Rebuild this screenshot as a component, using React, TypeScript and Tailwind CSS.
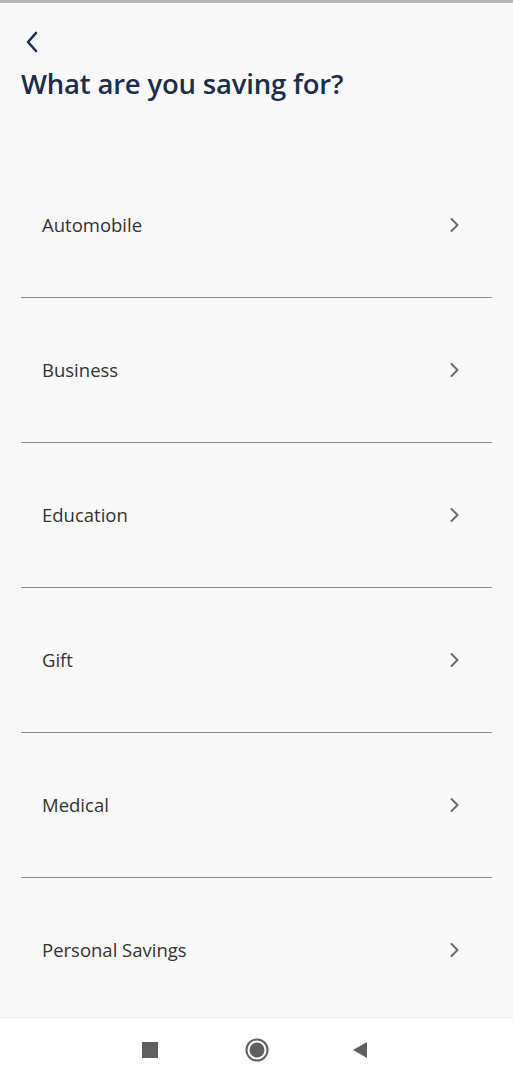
import React from "react";

const items = ["Automobile", "Business", "Education", "Gift", "Medical", "Personal Savings"];

function ChevronRight() {
  return (
    <svg width="12" height="16" viewBox="0 0 12 16" fill="none">
      <path d="M2.5 2 L8.5 8 L2.5 14" stroke="#6b6b6b" strokeWidth="2" strokeLinecap="round" strokeLinejoin="round" />
    </svg>
  );
}

export default function App() {
  return (
    <div
      className="w-[513px] h-[1080px] flex flex-col bg-[#f9f9f9] overflow-hidden"
      style={{ fontFamily: "'Open Sans', 'Noto Sans', sans-serif" }}
    >
      <div className="h-[3px] bg-[#b8b8b8] shrink-0" />
      <div className="px-[21px] pt-[27px] shrink-0">
        <button className="block w-[24px] h-[24px] -ml-[1px]">
          <svg width="24" height="24" viewBox="0 0 24 24" fill="none">
            <path d="M17 3 L9 12 L17 21" stroke="#1c2f4a" strokeWidth="2.6" strokeLinecap="round" strokeLinejoin="round" transform="translate(-1 0)" />
          </svg>
        </button>
        <h1 className="mt-[13px] text-[27.5px] leading-[34px] font-semibold text-[#1c2f4a] tracking-[-0.2px]">
          What are you saving for?
        </h1>
      </div>
      <div className="flex-1 overflow-hidden mt-[52px] px-[21px]">
        {items.map((it) => (
          <div key={it} className="h-[145px] flex items-center justify-between border-b border-[#8c8c8c] pl-[21px] pr-[31px]">
            <span className="text-[18.5px] text-[#333333]">{it}</span>
            <ChevronRight />
          </div>
        ))}
      </div>
      <div className="h-[63px] shrink-0 bg-white border-t border-[#ececec] flex items-center justify-center">
        <div className="flex items-center mt-[1px] -ml-[4px]">
          <div className="w-[16px] h-[16px] bg-[#5f5f5f] mr-[87px]" />
          <svg width="24" height="24" viewBox="0 0 24 24" className="mr-[83px]">
            <circle cx="12" cy="12" r="10.5" fill="none" stroke="#5f5f5f" strokeWidth="2" />
            <circle cx="12" cy="12" r="7.5" fill="#5f5f5f" />
          </svg>
          <svg width="16" height="18" viewBox="0 0 16 18">
            <path d="M15 1 L15 17 L1 9 Z" fill="#5f5f5f" />
          </svg>
        </div>
      </div>
    </div>
  );
}
